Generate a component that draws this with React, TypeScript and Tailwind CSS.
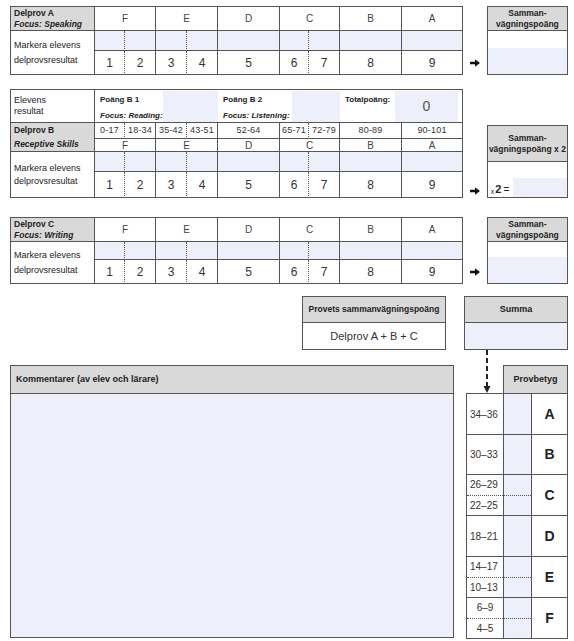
const cols = "grid grid-cols-[84px_30px_31px_31px_31px_62px_29px_31px_62px_61px] border-l border-t border-[#555]";
const cell = "border-r border-b border-[#555] flex items-center justify-center";
const dotR = "[border-right-style:dotted]";
const blue = "bg-[#edf0fa]";
const grey = "bg-[#d9d9d9]";

const grades = [
  { g: "F", wide: true },
  { g: "E", wide: true },
  { g: "D", wide: false },
  { g: "C", wide: true },
  { g: "B", wide: false },
  { g: "A", wide: false },
];
const dotted = [true, false, true, false, false, true, false, false, false];
const ranges = ["0-17", "18-34", "35-42", "43-51", "52-64", "65-71", "72-79", "80-89", "90-101"];

function Arrow({ mb }: { mb: string }) {
  return (
    <div className={`w-[24px] flex justify-center self-end pl-[1px] ${mb}`}>
      <svg width="10" height="8" viewBox="0 0 10 8">
        <path d="M0 2.8h5V0.3L10 4L5 7.7V5.2H0z" fill="#111" />
      </svg>
    </div>
  );
}

function GradeRow() {
  return (
    <>
      {grades.map((g) => (
        <div key={g.g} className={`${cell} ${g.wide ? "col-span-2" : ""} text-[10px] text-[#444]`}>
          {g.g}
        </div>
      ))}
    </>
  );
}

function BlueRow() {
  return (
    <>
      {dotted.map((d, i) => (
        <div key={i} className={`${cell} ${blue} ${d ? dotR : ""}`} />
      ))}
    </>
  );
}

function NumberRow() {
  return (
    <>
      {dotted.map((d, i) => (
        <div key={i} className={`${cell} ${d ? dotR : ""} text-[12px] text-[#333]`}>
          {i + 1}
        </div>
      ))}
    </>
  );
}

function Samman({ x2, head, white, low }: { x2?: boolean; head: string; white: string; low: string }) {
  return (
    <div className="w-[82px] border border-[#555] flex flex-col self-end">
      <div className={`${head} ${grey} border-b border-[#555] flex flex-col items-center justify-center font-bold text-[8.5px] leading-[11px]`}>
        <span>Samman-</span>
        <span className="whitespace-nowrap">{x2 ? "vägningspoäng x 2" : "vägningspoäng"}</span>
      </div>
      <div className={white} />
      {x2 ? (
        <div className={`${low} flex`}>
          <div className="w-[25px] flex items-end pb-[2px] pl-[3px] leading-none">
            <span className="text-[7px]">x</span>
            <span className="text-[11px] font-bold ml-[1px]">2</span>
            <span className="text-[10px] ml-[2px]">=</span>
          </div>
          <div className={`flex-1 ${blue}`} />
        </div>
      ) : (
        <div className={`${low} ${blue}`} />
      )}
    </div>
  );
}

function SimpleSection({ title, focus, blueRow, arrowMb }: { title: string; focus: string; blueRow: string; arrowMb: string }) {
  return (
    <div className="flex items-end">
      <div className={`${cols} w-[453px]`} style={{ gridTemplateRows: `24px ${blueRow} 24px` }}>
        <div className={`border-r border-b border-[#555] ${grey} flex flex-col justify-center pl-[3px] font-bold text-[8.5px] leading-[11px]`}>
          <span>{title}</span>
          <span className="italic">{focus}</span>
        </div>
        <GradeRow />
        <div className="row-span-2 border-r border-b border-[#555] flex flex-col justify-center pl-[3px] text-[9px] leading-[15px]">
          <span>Markera elevens</span>
          <span>delprovsresultat</span>
        </div>
        <BlueRow />
        <NumberRow />
      </div>
      <Arrow mb={arrowMb} />
      {title === "Delprov A" ? (
        <Samman head="h-[24px]" white="h-[17px]" low="h-[26px]" />
      ) : (
        <Samman head="h-[24px]" white="h-[15px]" low="h-[26px]" />
      )}
    </div>
  );
}

function SectionB() {
  return (
    <div className="flex items-end mt-[14px]">
      <div className={`${cols} grid-rows-[33px_16px_13px_20px_26px] w-[453px]`}>
        <div className="border-r border-b border-[#555] flex flex-col justify-center pl-[3px] text-[9px] leading-[11px]">
          <span>Elevens</span>
          <span>resultat</span>
        </div>
        <div className="col-span-9 border-r border-b border-[#555] flex pt-px whitespace-nowrap">
          <div className="w-[68px] pl-[5px] pt-[3px] font-bold text-[8px] leading-[11px]">
            <div>Poäng B 1</div>
            <div className="italic mt-[5px]">Focus: Reading:</div>
          </div>
          <div className={`w-[55px] ${blue}`} />
          <div className="w-[74px] pl-[5px] pt-[3px] font-bold text-[8px] leading-[11px]">
            <div>Poäng B 2</div>
            <div className="italic mt-[5px]">Focus: Listening:</div>
          </div>
          <div className={`w-[48px] ${blue}`} />
          <div className="w-[55px] pl-[5px] pt-[3px] font-bold text-[8px] leading-[11px]">
            <div>Totalpoäng:</div>
          </div>
          <div className={`w-[63px] ${blue} flex items-center justify-center text-[14px] text-[#555]`}>0</div>
        </div>
        <div className={`row-span-2 border-r border-b border-[#555] ${grey} flex flex-col justify-center pl-[3px] font-bold text-[8.5px] leading-[14px]`}>
          <span>Delprov B</span>
          <span className="italic">Receptive Skills</span>
        </div>
        {ranges.map((r, i) => (
          <div key={r} className={`${cell} ${dotted[i] ? dotR : ""} text-[9px] tracking-[0.2px] text-[#333]`}>
            {r}
          </div>
        ))}
        <GradeRow />
        <div className="row-span-2 border-r border-b border-[#555] flex flex-col justify-center pl-[3px] text-[9px] leading-[13px]">
          <span>Markera elevens</span>
          <span>delprovsresultat</span>
        </div>
        <BlueRow />
        <NumberRow />
      </div>
      <Arrow mb="mb-[3px]" />
      <Samman x2 head="h-[36px]" white="h-[16px]" low="h-[19px]" />
    </div>
  );
}

function RangeCell({ top, bottom, center }: { top: string; bottom?: string; center?: boolean }) {
  if (!bottom) {
    return <div className="border-r border-b border-[#555] flex items-center pl-[3px] text-[10px] text-[#333]">{top}</div>;
  }
  return (
    <div className="border-r border-b border-[#555] flex flex-col text-[10px] text-[#333]">
      <div className={`flex-1 flex items-center border-b border-dotted border-[#555] ${center ? "justify-center" : "pl-[3px]"}`}>{top}</div>
      <div className={`flex-1 flex items-center ${center ? "justify-center" : "pl-[3px]"}`}>{bottom}</div>
    </div>
  );
}

function BlueCell({ split }: { split?: boolean }) {
  return (
    <div className={`border-r border-b border-[#555] ${blue} flex flex-col`}>
      {split && <div className="flex-1 border-b border-dotted border-[#555]" />}
      {split && <div className="flex-1" />}
    </div>
  );
}

function Letter({ g }: { g: string }) {
  return <div className="border-r border-b border-[#555] flex items-center justify-center font-bold text-[14px] text-[#222]">{g}</div>;
}

export default function App() {
  return (
    <div className="w-[574px] h-[641px] bg-white pl-[10px] pr-[6px] pt-[6px] [font-family:'Liberation_Sans',Arial,sans-serif] text-[#222]">
      <SimpleSection title="Delprov A" focus="Focus: Speaking" blueRow="20px" arrowMb="mb-[8px]" />
      <SectionB />
      <div className="mt-[19px]">
        <SimpleSection title="Delprov C" focus="Focus: Writing" blueRow="18px" arrowMb="mb-[8px]" />
      </div>

      {/* Provets sammanvägningspoäng + summa */}
      <div className="flex justify-end gap-[18px] mt-[12px]">
        <div className="w-[144px] h-[54px] border border-[#555] flex flex-col">
          <div className={`h-[26px] ${grey} border-b border-[#555] flex items-center justify-center font-bold text-[8.5px]`}>
            Provets sammanvägningspoäng
          </div>
          <div className="flex-1 flex items-center justify-center text-[11px] text-[#333]">Delprov A + B + C</div>
        </div>
        <div className="w-[104px] h-[54px] border border-[#555] flex flex-col">
          <div className={`h-[26px] ${grey} border-b border-[#555] flex items-center justify-center font-bold text-[9px]`}>
            Summa
          </div>
          <div className={`flex-1 ${blue}`} />
        </div>
      </div>

      <div className="flex items-start">
        <div className="w-[444px] h-[273px] mt-[15px] border border-[#555] flex flex-col">
          <div className={`h-[28px] ${grey} border-b border-[#555] flex items-center pl-[5px] font-bold text-[9px]`}>
            Kommentarer (av elev och lärare)
          </div>
          <div className={`flex-1 ${blue}`} />
        </div>

        <div className="ml-[12px] w-[102px] flex flex-col">
          <div className="h-[43px] flex">
            <div className="w-[37px]">
              <svg width="37" height="43" viewBox="0 0 37 43">
                <line x1="21" y1="0" x2="21" y2="37" stroke="#222" strokeWidth="2" strokeDasharray="5 3" />
                <path d="M17.5 36H24.5L21 43z" fill="#222" />
              </svg>
            </div>
            <div className="w-[65px] flex flex-col">
              <div className="h-[15px]" />
              <div className={`flex-1 ${grey} border-t border-l border-r border-[#555] flex items-center justify-center font-bold text-[9px]`}>
                Provbetyg
              </div>
            </div>
          </div>
          <div className="grid grid-cols-[37px_28px_36px] grid-rows-[41px_40px_41px_41px_41px_41px] border-l border-t border-[#555]">
            <RangeCell top="34–36" />
            <BlueCell />
            <Letter g="A" />
            <RangeCell top="30–33" />
            <BlueCell />
            <Letter g="B" />
            <RangeCell top="26–29" bottom="22–25" />
            <BlueCell split />
            <Letter g="C" />
            <RangeCell top="18–21" />
            <BlueCell />
            <Letter g="D" />
            <RangeCell top="14–17" bottom="10–13" />
            <BlueCell split />
            <Letter g="E" />
            <RangeCell top="6–9" bottom="4–5" center />
            <BlueCell split />
            <Letter g="F" />
          </div>
        </div>
      </div>
    </div>
  );
}
